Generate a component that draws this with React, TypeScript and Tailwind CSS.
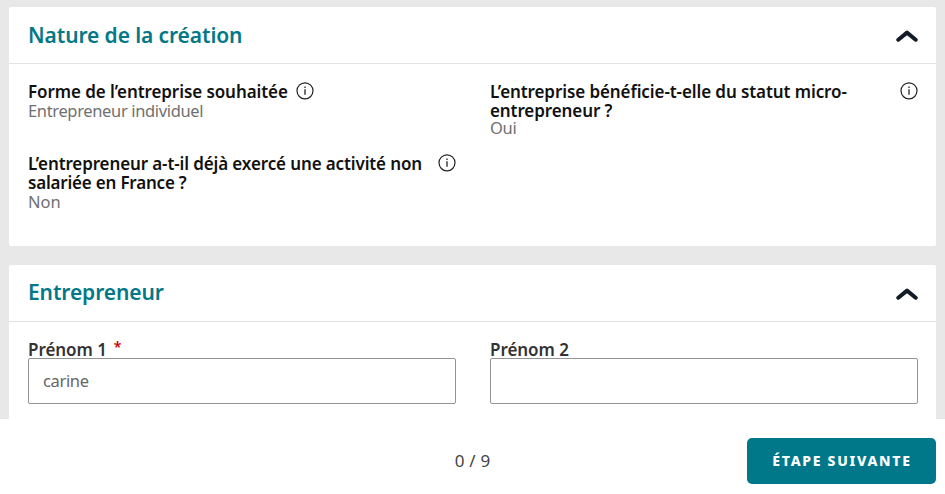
import { ReactNode, useState } from 'react'

interface SectionProps {
  title: string
  className?: string
  children: ReactNode
}

function InfoIcon({ className }: { className?: string }) {
  return (
    <svg viewBox="0 0 18 18" className={`h-[18px] w-[18px] shrink-0 ${className ?? ''}`} fill="none">
      <circle cx="9" cy="8.8" r="8" stroke="#222" strokeWidth="1.2" />
      <path d="M9 7.2v5.6" stroke="#222" strokeWidth="1.3" />
      <path d="M9 4.6v1.4" stroke="#222" strokeWidth="1.3" />
    </svg>
  )
}

function Section({ title, className, children }: SectionProps) {
  const [open, setOpen] = useState(true)

  return (
    <section className={`rounded-[2px] bg-white ${className ?? ''}`}>
      <header className="flex h-[57px] items-center justify-between border-b border-[#e3e3e3] pr-[18px] pl-[19px]">
        <h2 className="-mt-[1.5px] text-[21px] leading-[28px] font-semibold tracking-[-0.1px] text-[#047887]">{title}</h2>
        <button type="button" aria-label={title} onClick={() => setOpen(!open)}>
          <svg viewBox="0 0 22 12" className={`mt-[2px] h-[12px] w-[22px] ${open ? '' : 'rotate-180'}`} fill="none">
            <path d="M2.3 9.7 11 2.6l8.7 7.1" stroke="#121c28" strokeWidth="4" strokeLinecap="round" strokeLinejoin="round" />
          </svg>
        </button>
      </header>
      {open ? children : null}
    </section>
  )
}

export default function App() {
  const [firstName, setFirstName] = useState('carine')
  const [secondName, setSecondName] = useState('')

  return (
    <div className="flex h-[494px] flex-col overflow-hidden bg-[#e8e8e8] font-['Noto_Sans',sans-serif] text-[17px]">
      <main className="h-[419px] overflow-hidden pt-[7.3px] pr-[9px] pl-[9px]">
        <Section title="Nature de la création" className="h-[238.7px]">
          <div className="grid grid-cols-[428px_428px] gap-x-[34px] px-[19px] pt-[17.7px]">
            <div className="h-[72px]">
              <div className="flex items-start gap-[8px]">
                <h3 className="leading-[19px] font-semibold tracking-[-0.08px] whitespace-nowrap text-[#111]">Forme de l’entreprise souhaitée</h3>
                <InfoIcon />
              </div>
              <p className="text-[16.5px] leading-[20px] tracking-[-0.35px] text-[#707070]">Entrepreneur individuel</p>
            </div>
            <div className="h-[72px]">
              <div className="flex items-start justify-between">
                <h3 className="leading-[19px] font-semibold tracking-[-0.09px] whitespace-nowrap text-[#111]">
                  L’entreprise bénéficie-t-elle du statut micro-
                  <br />
                  entrepreneur ?
                </h3>
                <InfoIcon />
              </div>
              <p className="text-[16.5px] leading-[16px] tracking-[-0.35px] text-[#707070]">Oui</p>
            </div>
            <div>
              <div className="flex items-start justify-between">
                <h3 className="leading-[19px] font-semibold tracking-[-0.12px] whitespace-nowrap text-[#111]">
                  L’entrepreneur a-t-il déjà exercé une activité non
                  <br />
                  <span className="tracking-[-0.2px]">salariée en France ?</span>
                </h3>
                <InfoIcon />
              </div>
              <p className="text-[16.5px] leading-[19px] text-[#707070]">Non</p>
            </div>
          </div>
        </Section>

        <Section title="Entrepreneur" className="mt-[19px] h-[200px]">
          <div className="grid grid-cols-[428px_428px] gap-x-[34px] px-[19px] pt-[18px]">
            <label className="block">
              <span className="flex h-[18px] items-center gap-[7px] pt-[2px] font-semibold tracking-[-0.05px] text-[#333]">
                Prénom 1 <span className="-mt-[5px] text-[14px] leading-[18px] text-[#d00000]">*</span>
              </span>
              <input
                value={firstName}
                onChange={(event) => setFirstName(event.target.value)}
                className="block h-[46px] w-full rounded-[2px] border border-[#949494] px-[14px] text-[16.5px] tracking-[-0.35px] text-[#666] outline-none"
              />
            </label>
            <label className="block">
              <span className="flex h-[18px] items-center pt-[2px] font-semibold tracking-[-0.05px] text-[#333]">Prénom 2</span>
              <input
                value={secondName}
                onChange={(event) => setSecondName(event.target.value)}
                className="block h-[46px] w-full rounded-[2px] border border-[#949494] px-[14px] text-[16.5px] tracking-[-0.35px] text-[#666] outline-none"
              />
            </label>
          </div>
        </Section>
      </main>

      <footer className="grid h-[75px] grid-cols-[1fr_auto_1fr] items-start bg-white px-[9px] pt-[19px]">
        <span />
        <span className="leading-[46px] tracking-[0.2px] text-[#444]">0 / 9</span>
        <button
          type="button"
          className="h-[46px] w-[189px] justify-self-end rounded-[5px] bg-[#00788a] pb-[1px] pl-[1px] text-[14px] font-extrabold tracking-[1.7px] text-white"
        >
          ÉTAPE SUIVANTE
        </button>
      </footer>
    </div>
  )
}
